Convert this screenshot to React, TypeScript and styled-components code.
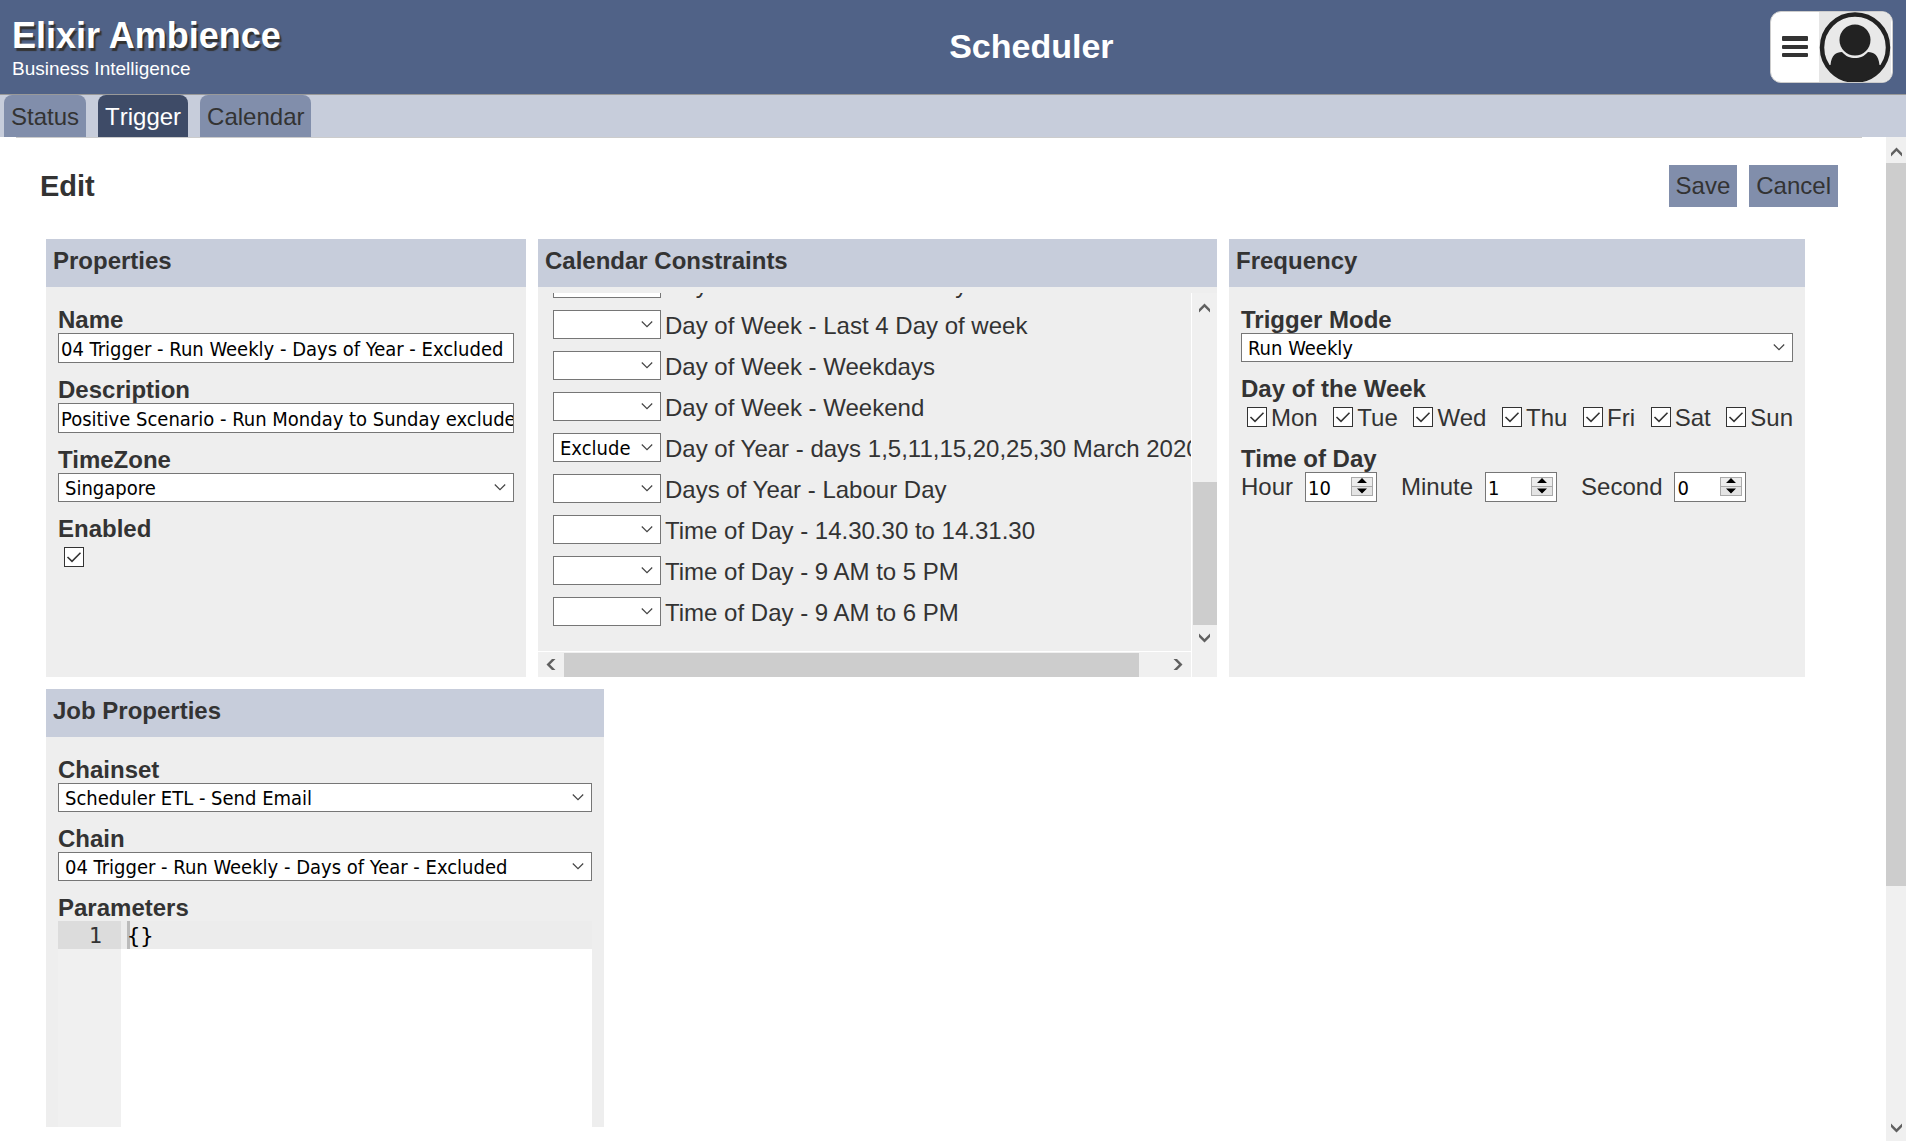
import React, { useId, useState } from "react";
import styled, { createGlobalStyle } from "styled-components";

const color = {
  header: "#506287",
  bar: "#c7cddb",
  tab: "#818eab",
  tabActive: "#3e4b67",
  panel: "#eeeeee",
  text: "#333333",
  field: "#767676",
  track: "#f0f0f0",
  thumb: "#cdcdcd",
  arrow: "#606060",
};

const uiFont = `"Liberation Sans", Arial, sans-serif`;
const fieldFont = `"DejaVu Sans Condensed", Tahoma, "Noto Sans", sans-serif`;
const codeFont = `"DejaVu Sans Mono", Consolas, monospace`;

const GlobalStyle = createGlobalStyle`
  *, *::before, *::after { box-sizing: border-box; }
  body {
    margin: 0;
    background: #fff;
    color: ${color.text};
    font: 24px/28px ${uiFont};
  }
  button, input, select, textarea { font: inherit; color: inherit; margin: 0; border-radius: 0; }
`;

const Page = styled.div`
  display: flex;
  flex-direction: column;
  height: 100vh;
  overflow: hidden;
`;

const Header = styled.header`
  display: flex;
  align-items: center;
  flex: none;
  padding: 11px 13px 11px 12px;
  background: ${color.header};
  border-bottom: 1px solid #999;
  color: #fff;
`;

const Brand = styled.div`
  padding: 4px 12px 2px 0;
`;

const BrandName = styled.div`
  font-size: 36px;
  font-weight: bold;
  line-height: 42px;
  text-shadow: 2px 3px 1px #333;
`;

const BrandTag = styled.div`
  font-size: 19px;
  line-height: 24px;
`;

const AppTitle = styled.h1`
  flex: 1;
  margin: 0;
  padding-bottom: 2px;
  text-align: center;
  font-size: 34px;
  line-height: 40px;
`;

const UserMenu = styled.button`
  display: flex;
  align-items: center;
  height: 72px;
  padding: 0 1px 0 0;
  overflow: hidden;
  border: 1px solid #ccc;
  border-radius: 11px;
  background: #fff;
  cursor: pointer;
`;

const Burger = styled.svg`
  width: 26px;
  height: 22px;
  margin: 0 11px;
`;

const Avatar = styled.svg`
  width: 72px;
  height: 70px;
`;

const Tabs = styled.nav`
  display: flex;
  flex: none;
  gap: 12px;
  padding: 0 4px;
  background: ${color.bar};
`;

const Tab = styled.a<{ $active?: boolean }>`
  padding: 8px 7px 6px;
  border-radius: 8px 8px 0 0;
  background: ${(p) => (p.$active ? color.tabActive : color.tab)};
  color: ${(p) => (p.$active ? "#fff" : color.text)};
  font-kerning: none;
  text-decoration: none;
`;

const Workspace = styled.div`
  display: flex;
  flex: 1;
  min-height: 0;
  padding-bottom: 5px;
`;

const Content = styled.main`
  flex: 1;
  min-width: 0;
  margin: 0 24px 14px 16px;
  padding: 27px 24px 0;
  overflow: hidden;
  border-top: 1px solid #ccc;
`;

const Toolbar = styled.div`
  display: flex;
  align-items: center;
  gap: 12px;
  margin-bottom: 32px;
`;

const Heading = styled.h2`
  flex: 1;
  margin: 0;
  font-size: 29px;
  line-height: 42px;
`;

const ActionButton = styled.button`
  padding: 7px;
  border: 0;
  background: ${color.tab};
  cursor: pointer;
`;

const Panels = styled.div`
  display: flex;
  flex-direction: column;
  gap: 12px;
  margin: 0 33px 0 6px;
`;

const PanelRow = styled.div`
  display: flex;
  gap: 12px;
`;

const PanelBox = styled.section<{ $flex: string }>`
  display: flex;
  flex-direction: column;
  flex: ${(p) => p.$flex};
  min-width: 0;
  background: ${color.panel};
`;

const PanelTitle = styled.h3`
  margin: 0;
  padding: 8px 7px 12px;
  background: ${color.bar};
  font-size: 24px;
  line-height: 28px;
`;

const PanelBody = styled.div`
  display: flex;
  flex-direction: column;
  gap: 12px;
  padding: 18px 12px 0;
`;

const FieldBox = styled.div`
  display: flex;
  flex-direction: column;
`;

const FieldGroup = styled.fieldset`
  margin: 0;
  padding: 0;
  border: 0;
  min-width: 0;
`;

const Legend = styled.legend`
  padding: 2px 0 0;
  font-weight: bold;
  line-height: 26px;
`;

const FieldLabel = styled.label`
  padding-top: 2px;
  font-weight: bold;
  line-height: 26px;
`;

const TextInput = styled.input`
  width: 100%;
  height: 30px;
  padding: 2px 0 0 2px;
  border: 1px solid ${color.field};
  background: #fff;
  color: #000;
  font: 20px/26px ${fieldFont};
`;

const SelectWrap = styled.span<{ $width?: string }>`
  position: relative;
  display: block;
  flex: none;
  width: ${(p) => p.$width ?? "100%"};
`;

const SelectInput = styled.select`
  appearance: none;
  display: block;
  width: 100%;
  height: 29px;
  padding: 2px 24px 0 6px;
  border: 1px solid ${color.field};
  background: #fff;
  color: #000;
  font: 20px/25px ${fieldFont};
`;

const SelectArrow = styled.svg`
  position: absolute;
  top: 11px;
  right: 8px;
  width: 12px;
  height: 7px;
  pointer-events: none;
`;

const CheckWrap = styled.span`
  position: relative;
  display: block;
  flex: none;
  width: 20px;
  height: 20px;
`;

const CheckInput = styled.input`
  appearance: none;
  display: block;
  width: 20px;
  height: 20px;
  border: 1px solid ${color.text};
  background: #fff;
`;

const CheckMark = styled.svg`
  position: absolute;
  inset: 0;
  pointer-events: none;
`;

const CheckLine = styled.div`
  display: flex;
  align-items: center;
  height: 30px;
  padding-left: 6px;
`;

const DayLine = styled.div`
  display: flex;
  justify-content: space-between;
  height: 30px;
  padding-left: 6px;
`;

const DayLabel = styled.label`
  display: flex;
  align-items: center;
  gap: 4px;
  padding-top: 2px;

  ${CheckWrap} {
    margin-bottom: 2px;
  }
`;

const TimeLine = styled.div`
  display: flex;
  gap: 24px;
`;

const TimeLabel = styled.label`
  display: flex;
  align-items: center;
  gap: 12px;
`;

const NumberWrap = styled.span`
  position: relative;
  display: block;
  width: 72px;
`;

const NumberInput = styled(TextInput)`
  display: block;
  appearance: textfield;
  padding-right: 28px;
  &::-webkit-inner-spin-button { appearance: none; }
`;

const Spinner = styled.svg`
  position: absolute;
  top: 5px;
  right: 4px;
  width: 22px;
  height: 19px;
`;

const ScrollGrid = styled.div`
  display: grid;
  grid-template-columns: minmax(0, 1fr) 26px;
  grid-template-rows: 358px 26px;
  margin-top: 6px;
`;

const ScrollView = styled.ul`
  display: flex;
  flex-direction: column;
  justify-content: flex-end;
  margin: 0;
  padding: 0 0 19px 15px;
  overflow: hidden;
  list-style: none;
`;

const ConstraintRow = styled.li`
  display: flex;
  flex: none;
  align-items: flex-end;
  gap: 4px;
  padding: 6px 0;
  line-height: 27px;
  white-space: nowrap;
`;

const Track = styled.div<{ $horizontal?: boolean }>`
  display: flex;
  flex-direction: ${(p) => (p.$horizontal ? "row" : "column")};
  align-items: center;
  background: ${color.track};
  border-style: solid;
  border-color: #fff;
  border-width: ${(p) => (p.$horizontal ? "1px 0 0 0" : "0 0 0 1px")};
`;

const TrackCorner = styled.div`
  background: ${color.track};
  border-left: 1px solid #fff;
`;

const Thumb = styled.div<{ $size: string; $horizontal?: boolean }>`
  flex: none;
  width: ${(p) => (p.$horizontal ? p.$size : "24px")};
  height: ${(p) => (p.$horizontal ? "24px" : p.$size)};
  background: ${color.thumb};
`;

const TrackSpace = styled.div`
  flex: 1;
`;

const ArrowBox = styled.span<{ $top: number }>`
  display: flex;
  flex: none;
  align-items: center;
  justify-content: center;
  width: 26px;
  height: 26px;
  padding-top: ${(p) => p.$top}px;
`;

const PageTrack = styled.div`
  display: flex;
  flex-direction: column;
  align-items: center;
  flex: none;
  width: 20px;
  background: ${color.track};
  overflow: hidden;
`;

const PageThumb = styled.div`
  width: 100%;
  height: 72%;
  background: ${color.thumb};
`;

const Editor = styled.div`
  display: flex;
  height: 600px;
  background: #fff;
  font: 22px/26px ${codeFont};
`;

const Gutter = styled.div`
  flex: none;
  width: 63px;
  background: #f0f0f0;
`;

const LineNumber = styled.div`
  padding: 2px 19px 0 0;
  background: #dcdcdc;
  text-align: right;
`;

const CodeArea = styled.div`
  flex: 1;
  background: linear-gradient(#ececec 28px, #fff 28px);
  padding-left: 6px;
`;

const Code = styled.textarea`
  display: block;
  width: 100%;
  height: 100%;
  padding: 2px 0 0;
  border: 0;
  outline: 0;
  resize: none;
  background: linear-gradient(#bbb, #bbb) 0 0 / 3px 28px no-repeat;
  color: #000;
`;

const arrowPaths = {
  up: "M0 6 5.5 0.5 11 6V9.500L5.5 4 0 9.500Z",
  down: "M0 4 5.5 9.500 11 4V0.500L5.5 6 0 0.500Z",
  left: "M6 0 0.500 5.5 6 11H9.500L4 5.5 9.500 0Z",
  right: "M4 0 9.500 5.5 4 11H0.500L6 5.5 0.500 0Z",
};

function ScrollArrow({ dir }: { dir: keyof typeof arrowPaths }) {
  const vertical = dir === "up" || dir === "down";
  return (
    <ArrowBox $top={dir === "up" ? 3 : 0}>
      <svg width={vertical ? 11 : 10} height={vertical ? 10 : 11} fill={color.arrow} aria-hidden="true">
        <path d={arrowPaths[dir]} />
      </svg>
    </ArrowBox>
  );
}

function Panel(props: { title: string; flex: string; children: React.ReactNode }) {
  return (
    <PanelBox $flex={props.flex}>
      <PanelTitle>{props.title}</PanelTitle>
      {props.children}
    </PanelBox>
  );
}

function Select(props: { id?: string; label?: string; value: string; options: string[]; width?: string }) {
  return (
    <SelectWrap $width={props.width}>
      <SelectInput id={props.id} aria-label={props.label} defaultValue={props.value}>
        {props.options.map((option) => (
          <option key={option} value={option}>
            {option}
          </option>
        ))}
      </SelectInput>
      <SelectArrow viewBox="0 0 12 7" aria-hidden="true">
        <path d="M0.800 0.500 6 5.600 11.200 0.500" fill="none" stroke="#444" strokeWidth="1.200" />
      </SelectArrow>
    </SelectWrap>
  );
}

function Checkbox({ id }: { id?: string }) {
  const [checked, setChecked] = useState(true);
  return (
    <CheckWrap>
      <CheckInput id={id} type="checkbox" checked={checked} onChange={() => setChecked(!checked)} />
      {checked && (
        <CheckMark viewBox="0 0 20 20" aria-hidden="true">
          <path d="M3.500 10 8 14.300 16.500 5.700" fill="none" stroke="#333" strokeWidth="1.600" />
        </CheckMark>
      )}
    </CheckWrap>
  );
}

function TextField({ label, value }: { label: string; value: string }) {
  const id = useId();
  return (
    <FieldBox>
      <FieldLabel htmlFor={id}>{label}</FieldLabel>
      <TextInput id={id} type="text" defaultValue={value} />
    </FieldBox>
  );
}

function SelectField({ label, value }: { label: string; value: string }) {
  const id = useId();
  return (
    <FieldBox>
      <FieldLabel htmlFor={id}>{label}</FieldLabel>
      <Select id={id} value={value} options={[value]} />
    </FieldBox>
  );
}

function TimeField({ label, value }: { label: string; value: number }) {
  return (
    <TimeLabel>
      {label}
      <NumberWrap>
        <NumberInput type="number" defaultValue={value} />
        <Spinner viewBox="0 0 22 19" aria-hidden="true">
          <rect x="0.500" y="0.500" width="21" height="9" fill="#ececec" stroke="#ababab" />
          <rect x="0.500" y="9.500" width="21" height="9" fill="#e4e4e4" stroke="#ababab" />
          <path d="M6 6 11 1 16 6ZM6 11.500 11 16.500 16 11.500Z" fill="#000" />
        </Spinner>
      </NumberWrap>
    </TimeLabel>
  );
}

const constraints: { name: string; mode?: string }[] = [
  { name: "Day of Week - First Tuesday" },
  { name: "Day of Week - Last 4 Day of week" },
  { name: "Day of Week - Weekdays" },
  { name: "Day of Week - Weekend" },
  { name: "Day of Year - days 1,5,11,15,20,25,30 March 2020", mode: "Exclude" },
  { name: "Days of Year - Labour Day" },
  { name: "Time of Day - 14.30.30 to 14.31.30" },
  { name: "Time of Day - 9 AM to 5 PM" },
  { name: "Time of Day - 9 AM to 6 PM" },
];

const days = ["Mon", "Tue", "Wed", "Thu", "Fri", "Sat", "Sun"];

export default function App() {
  const [tab, setTab] = useState("Trigger");
  return (
    <Page>
      <GlobalStyle />
      <Header>
        <Brand>
          <BrandName>Elixir Ambience</BrandName>
          <BrandTag>Business Intelligence</BrandTag>
        </Brand>
        <AppTitle>Scheduler</AppTitle>
        <UserMenu aria-label="User menu">
          <Burger viewBox="0 0 26 22" fill="#333">
            <rect y="0" width="26" height="5" rx="1" />
            <rect y="9" width="26" height="4" rx="1" />
            <rect y="17" width="26" height="4" rx="1" />
          </Burger>
          <Avatar viewBox="0 0 72 70">
            <rect width="72" height="70" fill="#e6e6e6" />
            <circle cx="36" cy="35.500" r="33" fill="#e9e9e9" stroke="#222" strokeWidth="4.500" />
            <path
              d="M11.500 53C12.500 43 17 40 23 40 27 44.500 31 46 36 46S45 44.500 49 40C55 40 59.500 43 60.500 53L63 53C56 64 46 69.500 36 69.500S16 64 9 53Z"
              fill="#222"
            />
            <circle cx="36" cy="28" r="15.500" fill="#222" />
          </Avatar>
        </UserMenu>
      </Header>

      <Tabs>
        {["Status", "Trigger", "Calendar"].map((name) => (
          <Tab key={name} href={`#${name.toLowerCase()}`} $active={name === tab} onClick={() => setTab(name)}>
            {name}
          </Tab>
        ))}
      </Tabs>

      <Workspace>
        <Content>
          <Toolbar>
            <Heading>Edit</Heading>
            <ActionButton>Save</ActionButton>
            <ActionButton>Cancel</ActionButton>
          </Toolbar>

          <Panels>
            <PanelRow>
              <Panel title="Properties" flex="480 1 0">
                <PanelBody>
                  <TextField label="Name" value="04 Trigger - Run Weekly - Days of Year - Excluded" />
                  <TextField label="Description" value="Positive Scenario - Run Monday to Sunday exclude" />
                  <SelectField label="TimeZone" value="Singapore" />
                  <FieldBox>
                    <FieldLabel htmlFor="enabled">Enabled</FieldLabel>
                    <CheckLine>
                      <Checkbox id="enabled" />
                    </CheckLine>
                  </FieldBox>
                </PanelBody>
              </Panel>

              <Panel title="Calendar Constraints" flex="679 1 0">
                <ScrollGrid>
                  <ScrollView>
                    {constraints.map((item) => (
                      <ConstraintRow key={item.name}>
                        <Select
                          label={item.name}
                          width="108px"
                          value={item.mode ?? ""}
                          options={["", "Include", "Exclude"]}
                        />
                        {item.name}
                      </ConstraintRow>
                    ))}
                  </ScrollView>
                  <Track>
                    <ScrollArrow dir="up" />
                    <TrackSpace />
                    <Thumb $size="40%" />
                    <ScrollArrow dir="down" />
                  </Track>
                  <Track $horizontal>
                    <ScrollArrow dir="left" />
                    <Thumb $horizontal $size="88%" />
                    <TrackSpace />
                    <ScrollArrow dir="right" />
                  </Track>
                  <TrackCorner />
                </ScrollGrid>
              </Panel>

              <Panel title="Frequency" flex="576 1 0">
                <PanelBody>
                  <SelectField label="Trigger Mode" value="Run Weekly" />
                  <FieldGroup>
                    <Legend>Day of the Week</Legend>
                    <DayLine>
                      {days.map((day) => (
                        <DayLabel key={day}>
                          <Checkbox />
                          {day}
                        </DayLabel>
                      ))}
                    </DayLine>
                  </FieldGroup>
                  <FieldGroup>
                    <Legend>Time of Day</Legend>
                    <TimeLine>
                      <TimeField label="Hour" value={10} />
                      <TimeField label="Minute" value={1} />
                      <TimeField label="Second" value={0} />
                    </TimeLine>
                  </FieldGroup>
                </PanelBody>
              </Panel>
            </PanelRow>

            <PanelRow>
              <Panel title="Job Properties" flex="0 1 558px">
                <PanelBody>
                  <SelectField label="Chainset" value="Scheduler ETL - Send Email" />
                  <SelectField label="Chain" value="04 Trigger - Run Weekly - Days of Year - Excluded" />
                  <FieldBox>
                    <FieldLabel htmlFor="parameters">Parameters</FieldLabel>
                    <Editor>
                      <Gutter>
                        <LineNumber>1</LineNumber>
                      </Gutter>
                      <CodeArea>
                        <Code id="parameters" spellCheck={false} defaultValue="{}" />
                      </CodeArea>
                    </Editor>
                  </FieldBox>
                </PanelBody>
              </Panel>
            </PanelRow>
          </Panels>
        </Content>

        <PageTrack>
          <ScrollArrow dir="up" />
          <PageThumb />
          <TrackSpace />
          <ScrollArrow dir="down" />
        </PageTrack>
      </Workspace>
    </Page>
  );
}
